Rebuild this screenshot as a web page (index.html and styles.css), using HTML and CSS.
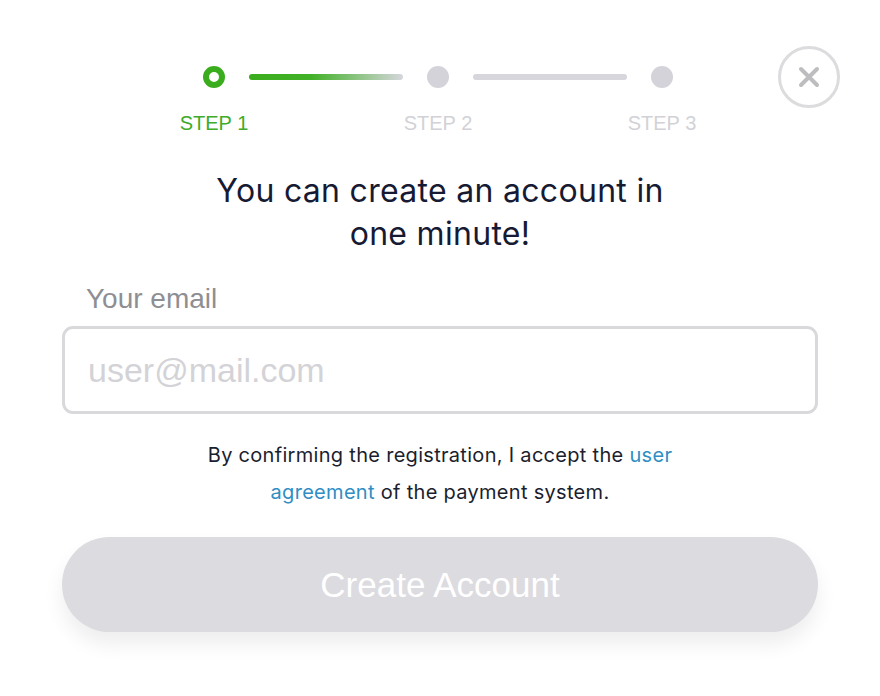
FILE: index.html
```html
<!DOCTYPE html>
<html lang="en">
<head>
<meta charset="utf-8">
<title>Create account</title>
<link rel="stylesheet" href="styles.css">
</head>
<body>
<div class="page">
  <div class="header">
    <div class="stepper">
      <div class="dot dot-active"></div>
      <div class="line line-active"></div>
      <div class="dot"></div>
      <div class="line"></div>
      <div class="dot"></div>
      <div class="label label-active">STEP 1</div>
      <div class="spacer"></div>
      <div class="label">STEP 2</div>
      <div class="spacer"></div>
      <div class="label">STEP 3</div>
    </div>
    <button class="close" aria-label="Close">
      <svg width="22" height="22" viewBox="0 0 22 22"><path d="M3 3 L19 19 M19 3 L3 19" stroke="#bdbdc0" stroke-width="4" stroke-linecap="round"/></svg>
    </button>
  </div>
  <h1 class="title">You can create an account in<br>one minute!</h1>
  <label class="field-label" for="email">Your email</label>
  <input id="email" class="field" type="text" placeholder="user@mail.com">
  <p class="terms">By confirming the registration, I accept the <a href="#">user<br>agreement</a> of the payment system.</p>
  <button class="submit">Create Account</button>
</div>
</body>
</html>
```

FILE: styles.css
```css
html, body {
  margin: 0;
  padding: 0;
  background: #ffffff;
}
.page {
  width: 880px;
  height: 696px;
  box-sizing: border-box;
  padding: 46px 62px 0 62px;
  display: flex;
  flex-direction: column;
  font-family: "Liberation Sans", Arial, sans-serif;
}
.header {
  display: grid;
  grid-template-columns: 1fr auto 1fr;
  align-items: start;
}
.stepper {
  grid-column: 2;
  margin-top: 20px;
  margin-left: -4px;
  display: grid;
  grid-template-columns: 22px 154px 22px 154px 22px;
  column-gap: 24px;
  row-gap: 23px;
  align-items: center;
}
.dot {
  width: 22px;
  height: 22px;
  border-radius: 50%;
  background: #d3d3d9;
  box-sizing: border-box;
}
.dot-active {
  background: #ffffff;
  border: 6px solid #3aad1e;
}
.line {
  height: 6px;
  border-radius: 3px;
  background: #d6d6dc;
}
.line-active {
  background: linear-gradient(90deg, #3aad1e 0%, #41b127 40%, #d6d6dc 100%);
}
.label {
  display: flex;
  justify-content: center;
  white-space: nowrap;
  font-size: 20px;
  line-height: 24px;
  color: #d2d2d6;
}
.label-active {
  color: #3eab2a;
}
.close {
  grid-column: 3;
  justify-self: end;
  width: 62px;
  height: 62px;
  margin-right: -22px;
  padding: 0;
  border: 3px solid #dcdcde;
  border-radius: 50%;
  background: #ffffff;
  display: flex;
  align-items: center;
  justify-content: center;
}
.title {
  margin: 34px 0 0 0;
  text-align: center;
  font-family: "Inter", sans-serif;
  font-weight: 400;
  font-size: 32px;
  letter-spacing: 0.3px;
  line-height: 43px;
  color: #161a33;
}
.field-label {
  margin-top: 29px;
  margin-left: 24px;
  font-size: 28px;
  line-height: 30px;
  color: #8e8e93;
}
.field {
  margin-top: 12px;
  height: 88px;
  box-sizing: border-box;
  border: 3px solid #d9d9dc;
  border-radius: 11px;
  padding: 0 0 0 23px;
  font-family: "Liberation Sans", Arial, sans-serif;
  font-size: 34px;
  color: #333;
  background: #ffffff;
  outline: none;
}
.field::placeholder {
  color: #d3d3d7;
}
.terms {
  margin: 23px 0 0 0;
  text-align: center;
  font-family: "Inter", sans-serif;
  font-size: 20px;
  letter-spacing: 0.3px;
  line-height: 37px;
  color: #1b1e2e;
}
.terms a {
  color: #2f8ec3;
  text-decoration: none;
}
.submit {
  margin-top: 26px;
  height: 95px;
  border: none;
  border-radius: 48px;
  background: #dcdbdf;
  color: #ffffff;
  font-family: "Liberation Sans", Arial, sans-serif;
  font-size: 35px;
  box-shadow: 0 12px 20px rgba(0, 0, 0, 0.07);
}
```
